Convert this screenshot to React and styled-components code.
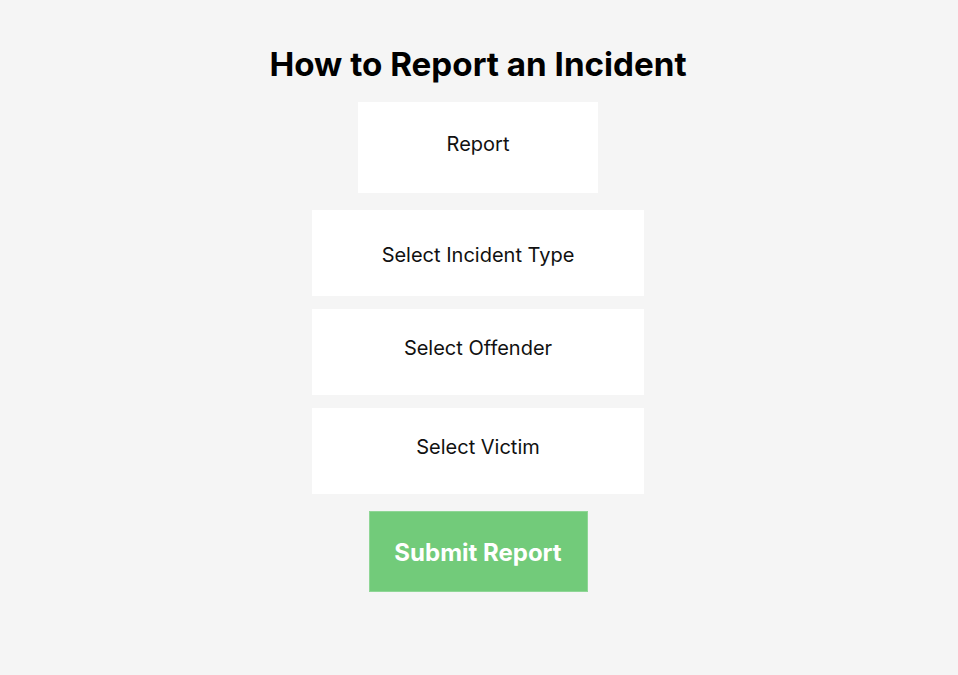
import React from 'react'
import styled, { createGlobalStyle } from 'styled-components'

const GlobalStyle = createGlobalStyle`
  html, body {
    margin: 0;
    padding: 0;
    background: #f5f5f5;
    font-family: Inter, 'Liberation Sans', sans-serif;
  }
`

const Page = styled.div`
  display: flex;
  flex-direction: column;
  align-items: center;
  padding-top: 44px;
  min-height: 675px;
  box-sizing: border-box;
  padding-right: 2px;
`

const Title = styled.h1`
  margin: 0 0 18px;
  font-size: 33.2px;
  font-weight: 700;
  line-height: 40px;
  color: #000;
`

// shift moves the label up (negative) or down (positive) inside the box
const Panel = styled.div`
  display: flex;
  align-items: center;
  justify-content: center;
  width: ${({ $wide }) => ($wide ? '332px' : '240px')};
  height: ${({ $wide }) => ($wide ? '86px' : '91px')};
  padding-top: ${({ $shift }) => Math.max($shift * 2, 0)}px;
  padding-bottom: ${({ $shift }) => Math.max(-$shift * 2, 0)}px;
  box-sizing: border-box;
  background: #fff;
  font-size: 20px;
  color: #111;
`

const SelectList = styled.div`
  display: flex;
  flex-direction: column;
  gap: 13px;
  margin: 17px 0;
`

const SubmitButton = styled.button`
  width: 219px;
  height: 81px;
  padding: 2px 0 0;
  border: 1px solid #8fd696;
  background: #72cb7a;
  color: #fff;
  font-family: Inter, 'Liberation Sans', sans-serif;
  font-size: 24px;
  font-weight: 700;
  cursor: pointer;
`

const selects = [
  { label: 'Select Incident Type', shift: 2 },
  { label: 'Select Offender', shift: -4 },
  { label: 'Select Victim', shift: -4 },
]

const App = () => (
  <>
    <GlobalStyle />
    <Page>
      <Title>How to Report an Incident</Title>
      <Panel $shift={-4}>Report</Panel>
      <SelectList>
        {selects.map(({ label, shift }) => (
          <Panel $wide $shift={shift} key={label}>{label}</Panel>
        ))}
      </SelectList>
      <SubmitButton>Submit Report</SubmitButton>
    </Page>
  </>
)

export default App
